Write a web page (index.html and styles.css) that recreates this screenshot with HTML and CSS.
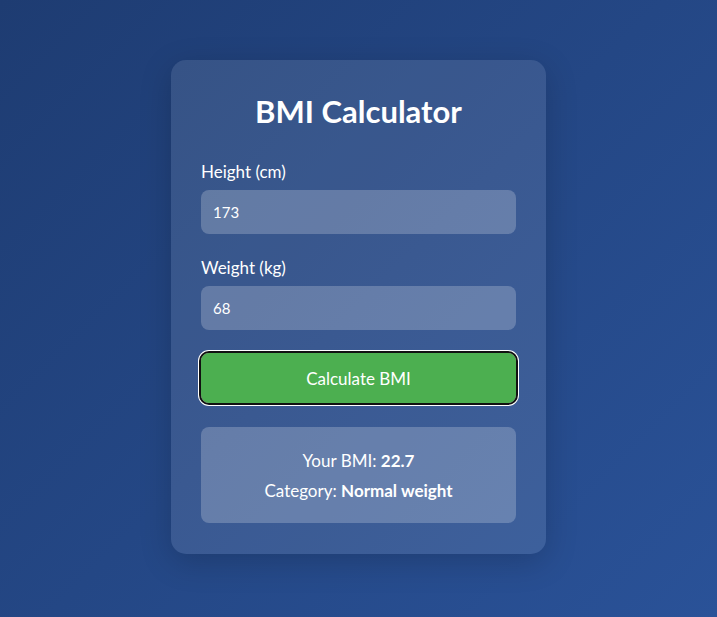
FILE: index.html
```html
<!DOCTYPE html>
<html lang="en">
<head>
<meta charset="utf-8">
<title>BMI Calculator</title>
<link rel="stylesheet" href="styles.css">
</head>
<body>
  <main class="card">
    <h1 class="title">BMI Calculator</h1>
    <div class="field">
      <label class="label" for="height">Height (cm)</label>
      <input class="input" id="height" type="text" value="173">
    </div>
    <div class="field">
      <label class="label" for="weight">Weight (kg)</label>
      <input class="input" id="weight" type="text" value="68">
    </div>
    <button class="btn" type="button">Calculate BMI</button>
    <div class="result">
      <p class="line">Your BMI: <strong>22.7</strong></p>
      <p class="line">Category: <strong>Normal weight</strong></p>
    </div>
  </main>
</body>
</html>
```

FILE: styles.css
```css
html, body {
  margin: 0;
  padding: 0;
  height: 100%;
}
body {
  font-family: Lato, "Open Sans", sans-serif;
  color: #fff;
  background: linear-gradient(135deg, #1e3c72 0%, #2a5298 100%);
  display: flex;
  justify-content: center;
  align-items: flex-start;
  min-height: 617px;
}
.card {
  margin-top: 60px;
  width: 315px;
  padding: 30px 30px 31px;
  background: rgba(255, 255, 255, 0.1);
  border-radius: 15px;
  box-shadow: 0 8px 32px rgba(0, 0, 0, 0.18);
  display: flex;
  flex-direction: column;
}
.title {
  margin: 0 0 30px;
  font-size: 31px;
  line-height: 42px;
  font-weight: 700;
  text-align: center;
}
.field {
  display: flex;
  flex-direction: column;
  margin-bottom: 24px;
}
.field + .field {
  margin-bottom: 23px;
}
.label {
  font-size: 17px;
  line-height: 20px;
  margin-bottom: 8px;
}
.input {
  box-sizing: border-box;
  height: 44px;
  padding: 0 12px;
  border: none;
  border-radius: 8px;
  background: rgba(255, 255, 255, 0.22);
  color: #fff;
  font-family: inherit;
  font-size: 15px;
  outline: none;
}
.btn {
  box-sizing: border-box;
  height: 50px;
  border: none;
  border-radius: 8px;
  background: #4caf50;
  color: #fff;
  font-family: inherit;
  font-size: 17px;
  outline: 2px solid #111;
  outline-offset: 0;
  box-shadow: 0 0 0 3px #fff;
  margin-bottom: 24px;
  cursor: pointer;
}
.result {
  box-sizing: border-box;
  padding: 19px 20px 17px;
  border-radius: 8px;
  background: rgba(255, 255, 255, 0.22);
  text-align: center;
}
.line {
  margin: 0;
  font-size: 17px;
  line-height: 30px;
}
.line strong {
  font-weight: 700;
}
```
